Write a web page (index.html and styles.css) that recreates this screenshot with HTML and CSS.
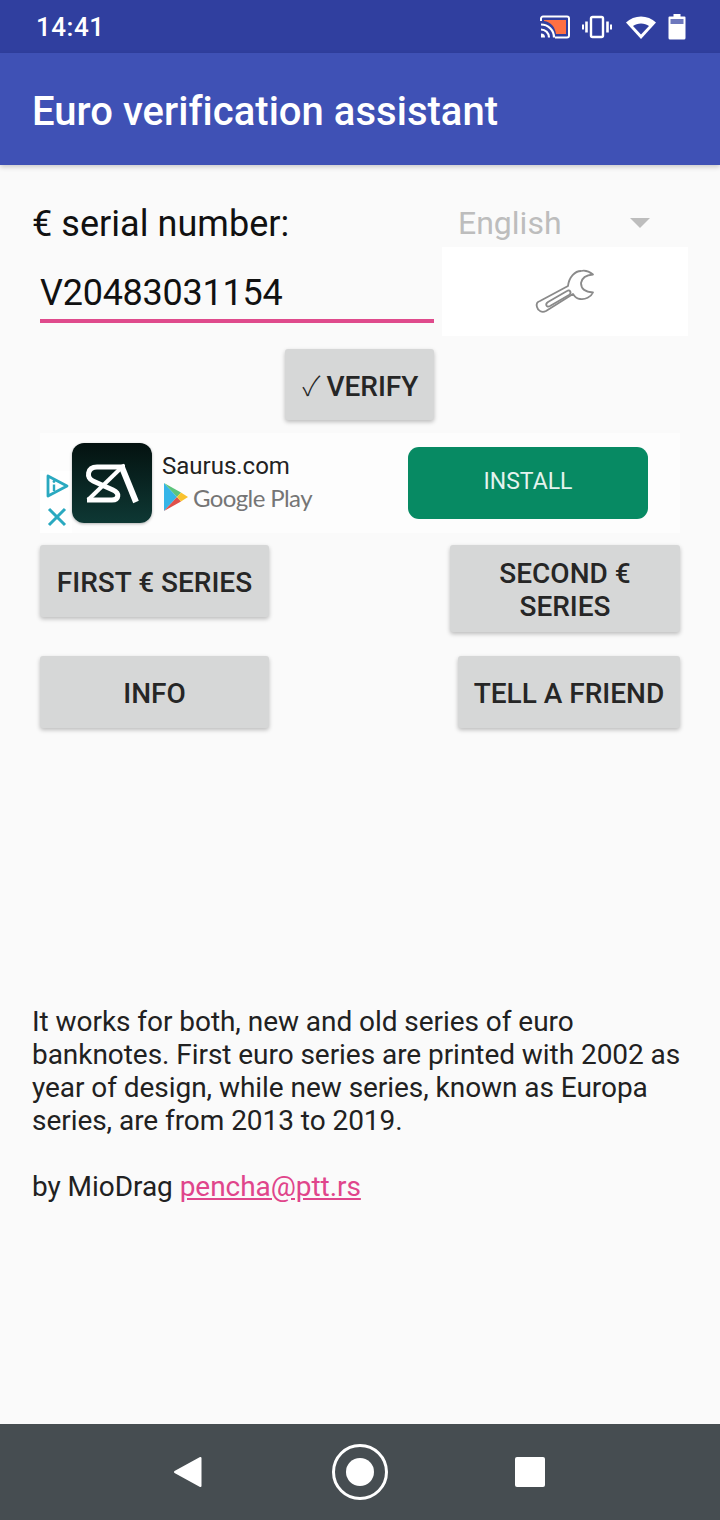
FILE: index.html
```html
<!DOCTYPE html>
<html lang="en">
<head>
<meta charset="utf-8">
<title>Euro verification assistant</title>
<link rel="stylesheet" href="styles.css">
</head>
<body>
<div class="phone">
	<header class="status-bar">
		<span class="clock">14:41</span>
		<div class="status-icons">
			<svg class="icon-cast" width="32" height="26" viewBox="0 0 32 26">
				<path d="M5 6H27V20H17C16 13 12 8 5 7Z" fill="#ff7043"/>
				<path d="M2 7V4.500A2 2 0 0 1 4 2.500H28A2 2 0 0 1 30 4.500V21.500A2 2 0 0 1 28 23.500H16" fill="none" stroke="#fff" stroke-width="2"/>
				<path d="M2 10.500A13 13 0 0 1 15 23.500M2 15.500A8 8 0 0 1 10 23.500" fill="none" stroke="#fff" stroke-width="2.200"/>
				<path d="M2 19.500A4 4 0 0 1 6 23.500H2Z" fill="#fff"/>
			</svg>
			<svg class="icon-vibrate" width="30" height="24" viewBox="0 0 30 24">
				<rect x="9" y="2" width="12" height="20" rx="1.500" fill="none" stroke="#fff" stroke-width="2.400"/>
				<path d="M4.500 6.500V17.500M25.500 6.500V17.500" stroke="#fff" stroke-width="2.600" fill="none"/>
				<path d="M1 9.500V14.500M29 9.500V14.500" stroke="#fff" stroke-width="2" fill="none"/>
			</svg>
			<svg class="icon-wifi" width="32" height="26" viewBox="0 0 32 26">
				<path d="M1 8.500C9 .5 23 .5 31 8.500L16 25Z" fill="#fff"/>
				<path d="M8 12C12 8.500 20 8.500 24 12L16 20.500Z" fill="#303f9f"/>
			</svg>
			<svg class="icon-battery" width="18" height="27" viewBox="0 0 18 27">
				<path d="M5.500 1H12.500V3.500H16.500A1 1 0 0 1 17.500 4.500V25A1.500 1.500 0 0 1 16 26.500H2A1.500 1.500 0 0 1 .5 25V4.500A1 1 0 0 1 1.500 3.500H5.500Z" fill="#fff"/>
				<rect x="2.500" y="6" width="13" height="5" fill="#6d78bd"/>
			</svg>
		</div>
	</header>

	<nav class="app-bar">
		<h1 class="app-title">Euro verification assistant</h1>
	</nav>

	<main class="app">
		<section class="serial-row">
			<div class="serial-col">
				<label class="serial-label">€ serial number:</label>
				<div class="serial-input">V20483031154</div>
			</div>
			<div class="tools-col">
				<div class="lang-select">
					<span>English</span>
					<i class="lang-arrow"></i>
				</div>
				<div class="tools-btn">
					<svg width="80" height="60" viewBox="0 0 80 60">
						<g fill="none" stroke="#8a8a8a" stroke-width="1.800" stroke-linejoin="round" stroke-linecap="round">
							<path d="M43 25C44 16 50 10 56 10C60 9 65 11 68 13.500C62 14 57 16 56 22C56 28 60 31 68 31.500C66 36 60 39 55 38C52 38 50 36 48 33L21 50C17 52 13 50 12 46C11 43 12 41 15 40Z"/>
							<path d="M23 41L42 30C45 28 47 32 44 34L25 45C21 47 20 43 23 41Z"/>
						</g>
					</svg>
				</div>
			</div>
		</section>

		<div class="verify-row">
			<button class="btn btn-verify"><span class="tick">✓</span><span>VERIFY</span></button>
		</div>

		<aside class="ad">
			<div class="ad-choices">
				<svg width="23" height="24" viewBox="0 0 23 24">
					<path d="M2 2L21 12L2 22Z" fill="none" stroke="#2aa9c0" stroke-width="2.800" stroke-linejoin="round"/>
					<path d="M8 10.500V17" stroke="#2aa9c0" stroke-width="2.400"/>
					<circle cx="8" cy="7.500" r="1.400" fill="#2aa9c0"/>
				</svg>
				<svg width="20" height="20" viewBox="0 0 20 20">
					<path d="M2 2L18 18M18 2L2 18" stroke="#2aa9c0" stroke-width="3"/>
				</svg>
			</div>
			<div class="ad-icon">
				<svg width="80" height="80" viewBox="0 0 80 80">
					<g fill="none" stroke="#fff" stroke-width="5">
						<path d="M53 24H25C15 24 14 35 21 38L41 47C48 50 47 57 40 57H15"/>
						<path d="M16 57L50 24" stroke-width="4"/>
						<path d="M49 22L64 59" stroke-width="6"/>
					</g>
				</svg>
			</div>
			<div class="ad-info">
				<div class="ad-name">Saurus.com</div>
				<div class="ad-store">
					<svg width="26" height="30" viewBox="0 0 26 30">
						<path d="M2 1L15 15L2 29Z" fill="#35b5e8"/>
						<path d="M2 1L19 10.500L15 15Z" fill="#5cc47c"/>
						<path d="M2 29L19 19.500L15 15Z" fill="#e0504a"/>
						<path d="M19 10.500L26 15L19 19.500L15 15Z" fill="#f9c22e"/>
					</svg>
					<span>Google Play</span>
				</div>
			</div>
			<div class="ad-install">INSTALL</div>
		</aside>

		<div class="btn-row series-row">
			<button class="btn btn-first">FIRST € SERIES</button>
			<button class="btn btn-second">SECOND €<br>SERIES</button>
		</div>
		<div class="btn-row">
			<button class="btn btn-first">INFO</button>
			<button class="btn btn-tell">TELL A FRIEND</button>
		</div>

		<section class="about">
			<p>It works for both, new and old series of euro banknotes. First euro series are printed with 2002 as year of design, while new series, known as Europa series, are from 2013 to 2019.</p>
			<p class="byline">by MioDrag <a href="#">pencha@ptt.rs</a></p>
		</section>
	</main>

	<footer class="nav-bar">
		<svg width="32" height="34" viewBox="0 0 32 34">
			<path d="M28.500 3V31L3 17Z" fill="#fff" stroke="#fff" stroke-width="2" stroke-linejoin="round"/>
		</svg>
		<div class="nav-home"><i></i></div>
		<i class="nav-square"></i>
	</footer>
</div>
</body>
</html>
```

FILE: styles.css
```css
/* Reset */
*,
*::before,
*::after {
	margin: 0;
	padding: 0;
	box-sizing: border-box;
}

body {
	font-family: Roboto, sans-serif;
	background: #fafafa;
	color: #212121;
}

.phone {
	display: flex;
	flex-direction: column;
	height: 1520px;
}

/* Status bar */
.status-bar {
	display: flex;
	justify-content: space-between;
	align-items: center;
	height: 53px;
	padding: 0 34px 0 36px;
	background: #303f9f;
	color: #fff;
}

.clock {
	font-size: 26px;
	font-weight: 500;
	letter-spacing: 0.5px;
}

.status-icons {
	display: flex;
	align-items: center;
	gap: 11px;
}

.icon-vibrate {
	margin-right: 2px;
}

/* App bar */
.app-bar {
	display: flex;
	align-items: center;
	height: 112px;
	padding: 4px 33px 0;
	background: #3f51b5;
	box-shadow: 0 2px 5px rgba(0, 0, 0, 0.2);
}

.app-title {
	margin-left: -1px;
	font-size: 40px;
	font-weight: 500;
	letter-spacing: 0.03px;
	color: #fff;
}

/* Main */
.app {
	flex: 1;
	padding: 35px 40px 0;
}

.serial-row {
	display: flex;
	justify-content: space-between;
	margin-right: -8px;
}

.serial-col {
	width: 394px;
}

.serial-label {
	display: block;
	height: 47px;
	margin-left: -8px;
	font-size: 36px;
	letter-spacing: 0.05px;
	line-height: 48px;
	color: #111;
}

.serial-input {
	height: 76px;
	border-bottom: 4px solid #df4a8c;
	font-size: 36px;
	line-height: 93px;
	letter-spacing: -0.25px;
	color: #111;
}

.tools-col {
	width: 246px;
}

.lang-select {
	display: flex;
	justify-content: space-between;
	align-items: center;
	height: 47px;
	padding: 0 38px 2px 16px;
	font-size: 32px;
	color: #bdbdbd;
}

.lang-arrow {
	width: 0;
	height: 0;
	border: 10px solid transparent;
	border-top-color: #bdbdbd;
	border-bottom: 0;
}

.tools-btn {
	display: flex;
	justify-content: center;
	align-items: center;
	height: 89px;
	padding-bottom: 2px;
	background: #fff;
}

/* Buttons */
.btn {
	padding-top: 2px;
	border: 0;
	border-radius: 3px;
	background: #d6d7d7;
	box-shadow: 0 2px 4px rgba(0, 0, 0, 0.25);
	font-family: Roboto, sans-serif;
	font-size: 28px;
	font-weight: 500;
	line-height: 33px;
	color: #262626;
}

.verify-row {
	display: flex;
	justify-content: center;
	margin-top: 13px;
	margin-right: 1px;
}

.btn-verify {
	width: 149px;
	height: 71px;
	padding-top: 3px;
	white-space: nowrap;
}

.tick {
	margin: 0 6px 0 2px;
	font-family: "Noto Sans CJK JP", sans-serif;
	font-weight: 300;
	font-size: 27px;
	line-height: 0;
}

.btn-row {
	display: flex;
	justify-content: space-between;
	align-items: flex-start;
	margin-top: 24px;
}

.series-row {
	margin-top: 12px;
}

.btn-first {
	width: 229px;
	height: 72px;
}

.btn-second {
	width: 230px;
	height: 87px;
}

.btn-tell {
	width: 222px;
	height: 72px;
}

/* Ad */
.ad {
	display: flex;
	align-items: center;
	height: 100px;
	margin-top: 13px;
	background: #fdfdfd;
}

.ad-choices {
	display: flex;
	flex-direction: column;
	align-items: center;
	gap: 9px;
	align-self: flex-end;
	width: 32px;
	height: 62px;
	padding-top: 3px;
	padding-left: 2px;
	background: #fff;
}

.ad-icon {
	width: 80px;
	height: 80px;
	border-radius: 12px;
	background: linear-gradient(#041210, #0e3834);
	box-shadow: 0 1px 3px rgba(0, 0, 0, 0.3);
}

.ad-info {
	width: 256px;
	padding: 0 0 4px 10px;
}

.ad-name {
	font-size: 24px;
	line-height: 32px;
	color: #222;
}

.ad-store {
	display: flex;
	align-items: center;
	gap: 5px;
	font-family: Lato, sans-serif;
	font-size: 24px;
	letter-spacing: -0.6px;
	color: #757575;
}

.ad-install {
	width: 240px;
	height: 72px;
	border-radius: 11px;
	background: #078a63;
	color: #e4f3ee;
	font-size: 23px;
	line-height: 70px;
	text-align: center;
}

/* About text */
.about {
	width: 656px;
	margin: 277px 0 0 -8px;
	font-size: 28px;
	letter-spacing: -0.05px;
	line-height: 33px;
	color: #212121;
}

.byline {
	margin-top: 33px;
}

.byline a {
	color: #e0458b;
}

/* Nav bar */
.nav-bar {
	display: flex;
	justify-content: center;
	align-items: center;
	gap: 127px;
	height: 96px;
	padding-right: 3px;
	background: #464d51;
}

.nav-home {
	display: flex;
	justify-content: center;
	align-items: center;
	width: 56px;
	height: 56px;
	margin-left: 1px;
	border: 3px solid #fff;
	border-radius: 50%;
}

.nav-home i {
	width: 28px;
	height: 28px;
	border-radius: 50%;
	background: #fff;
}

.nav-square {
	width: 30px;
	height: 30px;
	border-radius: 2px;
	background: #fff;
}
```
